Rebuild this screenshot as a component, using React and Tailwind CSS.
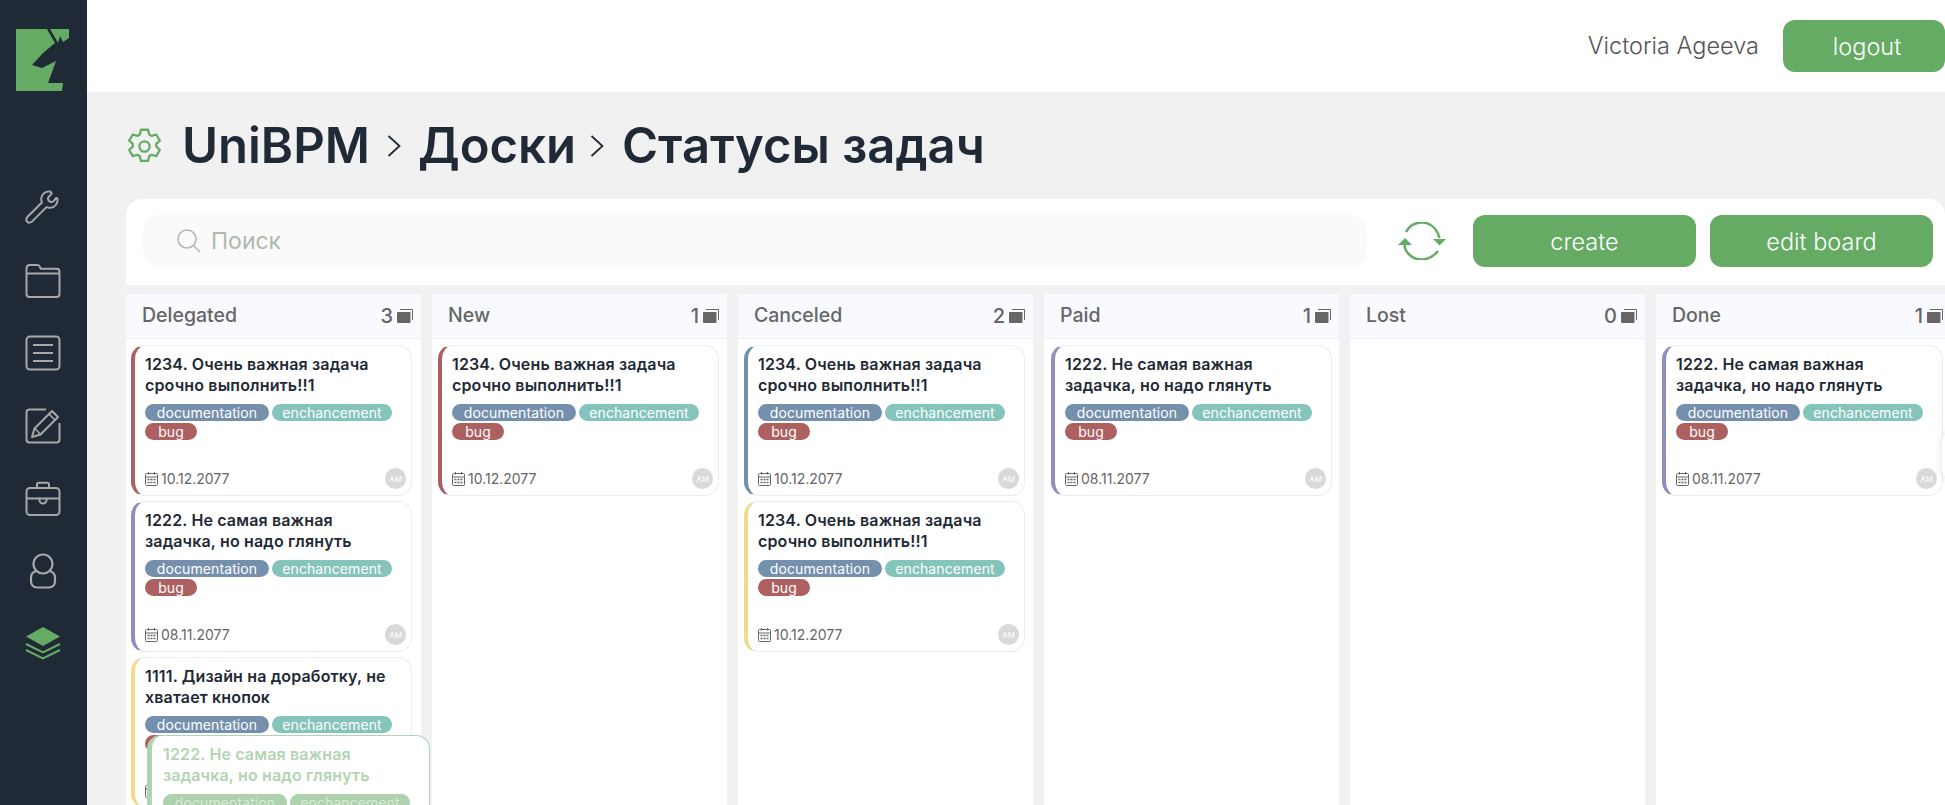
import React from "react";

const Wrench = () => (
  <svg width="36" height="36" viewBox="0 0 36 36" fill="none" stroke="#a8a8a8" strokeWidth="2" strokeLinejoin="round">
    <path d="M25.5 1.6c-4.6-.9-9 2.3-9.3 7-.1 1.5.2 2.7.7 3.9L2.6 26.800c-1.600 1.600-1.500 3.600-.3 4.900 1.300 1.300 3.300 1.300 4.900-.3l14.300-14.300c1.200.5 2.400.8 3.900.7 4.700-.3 7.900-4.700 7-9.300l-1.300-.5-2.700 3.300c-1.300.9-3.200.8-4.300-.2-1.100-1.100-1.300-3-.4-4.200l3-3.300z" />
  </svg>
);
const Folder = () => (
  <svg width="36" height="36" viewBox="0 0 36 36" fill="none" stroke="#a8a8a8" strokeWidth="2" strokeLinejoin="round">
    <path d="M1.500 5.500c0-2 1-3.500 3-3.500h8c1.500 0 2 .8 2.500 2l.8 1.700H31.500c2 0 3 1 3 3v22.300c0 2-1 3-3 3h-27c-2 0-3-1-3-3z" />
    <path d="M1.500 10.500h33" />
  </svg>
);
const ListIcon = () => (
  <svg width="36" height="36" viewBox="0 0 36 36" fill="none" stroke="#a8a8a8" strokeWidth="2">
    <rect x="1.500" y="1.500" width="33" height="33" rx="3.500" />
    <path d="M8 10h20M8 18h20M8 26h20" strokeWidth="1.800" />
  </svg>
);
const EditIcon = () => (
  <svg width="36" height="36" viewBox="0 0 36 36" fill="none" stroke="#a8a8a8" strokeWidth="2" strokeLinejoin="round">
    <path d="M21 1.500H4.500c-2 0-3 1-3 3v27c0 2 1 3 3 3h27c2 0 3-1 3-3V15" />
    <path d="M7 29l2.500-8.500L27 3l6 6-17.500 17.500z" />
    <path d="M24 6l6 6M10 20.500l5.500 6" strokeWidth="1.600" />
  </svg>
);
const Briefcase = () => (
  <svg width="36" height="36" viewBox="0 0 36 36" fill="none" stroke="#a8a8a8" strokeWidth="2" strokeLinejoin="round">
    <rect x="1.500" y="7" width="33" height="27" rx="3.500" />
    <path d="M12 7V3.500c0-1 .7-1.800 1.800-1.800h8.400c1.100 0 1.800.8 1.800 1.800V7" />
    <path d="M1.500 17.500H14.500M21.500 17.500H34.500" />
    <path d="M14.500 17.500h7v1.500a3.500 3.500 0 0 1-7 0z" />
  </svg>
);
const UserIcon = () => (
  <svg width="36" height="36" viewBox="0 0 36 36" fill="none" stroke="#a8a8a8" strokeWidth="2.200">
    <circle cx="18" cy="11" r="9.500" />
    <path d="M11.500 18c-4 1-5.500 3.500-5.500 6.500v3.500c0 4 2.500 6.500 6 6.500h12c3.500 0 6-2.500 6-6.500v-3.500c0-3-1.500-5.500-5.500-6.500" />
  </svg>
);
const Layers = () => (
  <svg width="36" height="34" viewBox="0 0 36 34" fill="none">
    <path d="M18 1L35 10.500L18 20L1 10.500z" fill="#65ab64" />
    <path d="M1 18l17 8.500L35 18M1 24l17 8.500L35 24" stroke="#65ab64" strokeWidth="2" />
  </svg>
);
const Logo = () => (
  <svg width="53" height="62" viewBox="0 0 53 62" fill="#65ab64">
    <polygon points="0,0 31,0 39,14 27,24 16,36 26,39 40,32 32,54 47,54 46,62 0,62" />
    <polygon points="34,0 53,0 53,9 47,13 44,7 42,14" />
  </svg>
);
const Gear = () => (
  <svg width="37" height="37" viewBox="0 0 36 36" fill="none" stroke="#65ab64" strokeWidth="2.200" strokeLinejoin="round">
    <path d="M14.500 1.500h7l1 4.600 2.400 1.400 4.500-1.400 3.500 6-3.500 3.200v2.700l3.500 3.200-3.500 6-4.500-1.400-2.400 1.400-1 4.600h-7l-1-4.600-2.400-1.400-4.500 1.400-3.500-6 3.500-3.200v-2.700l-3.500-3.200 3.500-6 4.500 1.400 2.400-1.400z" transform="translate(0 0.200)" />
    <circle cx="18" cy="18" r="5" />
  </svg>
);
const Chevron = () => (
  <svg width="14" height="24" viewBox="0 0 14 24" fill="none" stroke="#1f2a36" strokeWidth="1.800">
    <path d="M1.500 2l11 10-11 10" />
  </svg>
);
const Search = () => (
  <svg width="24" height="24" viewBox="0 0 24 24" fill="none" stroke="#b0b8b0" strokeWidth="1.500">
    <circle cx="10" cy="10" r="9" />
    <path d="M16.500 16.500L23 23" />
  </svg>
);
const Sync = () => (
  <svg width="48" height="38" viewBox="8 12 48 38" fill="none">
    <path d="M16 22C20 14 28 12 33 12.500C41 13 47 19 49.500 28" stroke="#65ab64" strokeWidth="2.500" />
    <path d="M14.500 35C15 43 23 49.500 31 49.500C38 49.500 44 46 48 41" stroke="#65ab64" strokeWidth="2.500" />
    <polygon points="43,29 56,29 49.500,35.500" fill="#65ab64" />
    <polygon points="8,35 22,35 15,28" fill="#65ab64" />
  </svg>
);
const Stack = () => (
  <svg width="16" height="14" viewBox="0 0 16 14" className="shrink-0">
    <rect x="0" y="3" width="13.500" height="11" rx="1" fill="#666" />
    <path d="M3 .5h12.500v10.500" fill="none" stroke="#666" strokeWidth="1" />
  </svg>
);
const Calendar = ({ color = "#666" }) => (
  <svg width="13" height="14" viewBox="0 0 13 14" fill="none" stroke={color} strokeWidth="1">
    <rect x=".5" y="1.500" width="12" height="12" rx="1" />
    <path d="M.5 5h12M3.500 0v2.500M9.500 0v2.500" />
    <path d="M2.500 7.500h2M5.500 7.500h2M8.500 7.500h2M2.500 10.500h2M5.500 10.500h2M8.500 10.500h2" strokeWidth="1.600" />
  </svg>
);

const Tags = ({ drag }) => {
  const base = "h-[17px] rounded-full text-[14px] tracking-[0.1px] leading-[17px] flex items-center justify-center";
  return (
    <div className="flex flex-wrap gap-x-[3px] gap-y-[2px] mt-[9px] w-[250px]">
      <span className={`${base} w-[124px] ${drag ? "bg-[#add2ad] text-[#d8ead8]" : "bg-[#7590ad] text-white"}`}>documentation</span>
      <span className={`${base} w-[120px] ${drag ? "bg-[#add2ad] text-[#d8ead8]" : "bg-[#85c4bb] text-white"}`}>enchancement</span>
      <span className={`${base} w-[52px] ${drag ? "bg-[#add2ad] text-[#d8ead8]" : "bg-[#ad6060] text-white"}`}>bug</span>
    </div>
  );
};

const Card = ({ bar, title, date }) => (
  <div className={`h-[151px] shrink-0 rounded-[14px] border border-[#e9ecfa] border-l-4 ${bar} bg-white pl-[10px] pr-[5px] pt-[8px] pb-[6px] flex flex-col`}>
    <div className="text-[16px] tracking-[0.15px] leading-[20.700px] font-semibold text-[#1f2a36]">{title}</div>
    <Tags />
    <div className="mt-auto flex items-center justify-between">
      <div className="flex items-center gap-[3px] text-[14px] text-[#666] leading-[20px]">
        <Calendar />
        <span>{date}</span>
      </div>
      <div className="w-[21px] h-[21px] rounded-full bg-[#d9d9d9] text-white text-[8px] flex items-center justify-center">AM</div>
    </div>
  </div>
);

const A = { title: <>1234. Очень важная задача<br />срочно выполнить!!1</>, date: "10.12.2077" };
const B = { title: <>1222. Не самая важная<br />задачка, но надо глянуть</>, date: "08.11.2077" };
const C = { title: <>1111. Дизайн на доработку, не<br />хватает кнопок</>, date: "10.12.2077" };
const red = "border-l-[#ad6060]";
const purple = "border-l-[#8f8fbf]";
const yellow = "border-l-[#f0dc8c]";

const columns = [
  { name: "Delegated", n: 3, pad: "pl-[5px] pr-[9px]", cards: [{ ...A, bar: red }, { ...B, bar: purple }, { ...C, bar: yellow }] },
  { name: "New", n: 1, pad: "pl-[6px] pr-[8px]", cards: [{ ...A, bar: red }] },
  { name: "Canceled", n: 2, pad: "pl-[6px] pr-[8px]", cards: [{ ...A, bar: "border-l-[#6f94a9]" }, { ...A, bar: yellow }] },
  { name: "Paid", n: 1, pad: "pl-[7px] pr-[7px]", cards: [{ ...B, bar: purple }] },
  { name: "Lost", n: 0, pad: "pl-[6px] pr-[8px]", cards: [] },
  { name: "Done", n: 1, pad: "pl-[6px] pr-[8px]", cards: [{ ...B, bar: purple }] },
];

const Column = ({ name, n, cards, pad }) => (
  <div className="w-[295px] shrink-0 flex flex-col bg-white">
    <div className="h-[46px] shrink-0 bg-[#f9faff] border-b border-t border-[#edf0fa] flex items-center justify-between pl-[16px] pr-[8px]">
      <span className="text-[19.500px] font-medium text-[#666] relative">{name}</span>
      <div className="flex items-center gap-[4px] text-[20px] font-medium text-[#666]">
        <span>{n}</span>
        <Stack />
      </div>
    </div>
    <div className={`flex flex-col gap-[5px] pt-[6px] ${pad} flex-1`}>
      {cards.map((c, i) => <Card key={i} {...c} />)}
    </div>
  </div>
);

export default function App() {
  return (
    <div className="relative flex h-[805px] w-[1945px] overflow-hidden bg-[#f1f1f1] font-['Inter',sans-serif]">
      <aside className="w-[87px] shrink-0 bg-[#1f2a36] flex flex-col items-center">
        <div className="mt-[29px] ml-[-2px]"><Logo /></div>
        <nav className="mt-[99px] ml-[-1px] flex flex-col items-center gap-[36.700px]">
          <Wrench /><Folder /><ListIcon /><EditIcon /><Briefcase /><UserIcon /><Layers />
        </nav>
      </aside>
      <main className="flex-1 min-w-0 flex flex-col">
        <header className="h-[93px] shrink-0 bg-white border-b border-[#eef0f5] flex items-start justify-end">
          <span className="mt-[32px] mr-[24px] text-[23.500px] font-light text-[#555] leading-[28px]">Victoria Ageeva</span>
          <button className="mt-[20px] w-[162px] h-[52px] pt-[2px] pl-[6px] rounded-xl bg-[#65ab64] text-white text-[23.500px] font-light">logout</button>
        </header>
        <div className="h-[106px] shrink-0 flex items-center pl-[39px] text-[#1f2a36] text-[49px] font-semibold">
          <Gear />
          <span className="ml-[19px]">UniBPM</span>
          <span className="mx-[17px]"><Chevron /></span>
          <span>Доски</span>
          <span className="ml-[14px] mr-[18px]"><Chevron /></span>
          <span>Статусы задач</span>
        </div>
        <div className="h-[86px] shrink-0 ml-[39px] bg-white rounded-t-2xl pt-[16px] pl-[17px] pr-[12px] flex items-start">
          <div className="w-[1224px] h-[52px] rounded-2xl bg-[#fafafa] flex items-center pl-[34px] text-[23px] text-[#b0b8b0] gap-[10px]">
            <Search />
            <span>Поиск</span>
          </div>
          <div className="ml-[31px] mt-[7px]"><Sync /></div>
          <button className="ml-[27px] w-[223px] h-[52px] pt-[2px] rounded-xl bg-[#65ab64] text-white text-[23.500px] font-light">create</button>
          <button className="ml-[14px] w-[223px] h-[52px] pt-[2px] rounded-xl bg-[#65ab64] text-white text-[23.500px] font-light">edit board</button>
        </div>
        <div className="mt-[8px] ml-[39px] flex-1 flex gap-[11px] min-h-0">
          {columns.map((c) => <Column key={c.name} {...c} />)}
        </div>
      </main>
      <div className="absolute left-[147px] top-[735px] w-[283px] h-[151px] rounded-[14px] border border-[#b0d4b0] border-l-[5px] bg-white pl-[11px] pt-[8px]">
        <div className="text-[16px] tracking-[0.15px] leading-[20.700px] font-semibold text-[#b2d5b2]">1222. Не самая важная<br />задачка, но надо глянуть</div>
        <Tags drag />
      </div>
      <div className="absolute left-[1942px] top-[433px] w-[40px] h-[45px] rounded-lg bg-white shadow-[0_0_8px_rgba(0,0,0,0.12)]" />
    </div>
  );
}
